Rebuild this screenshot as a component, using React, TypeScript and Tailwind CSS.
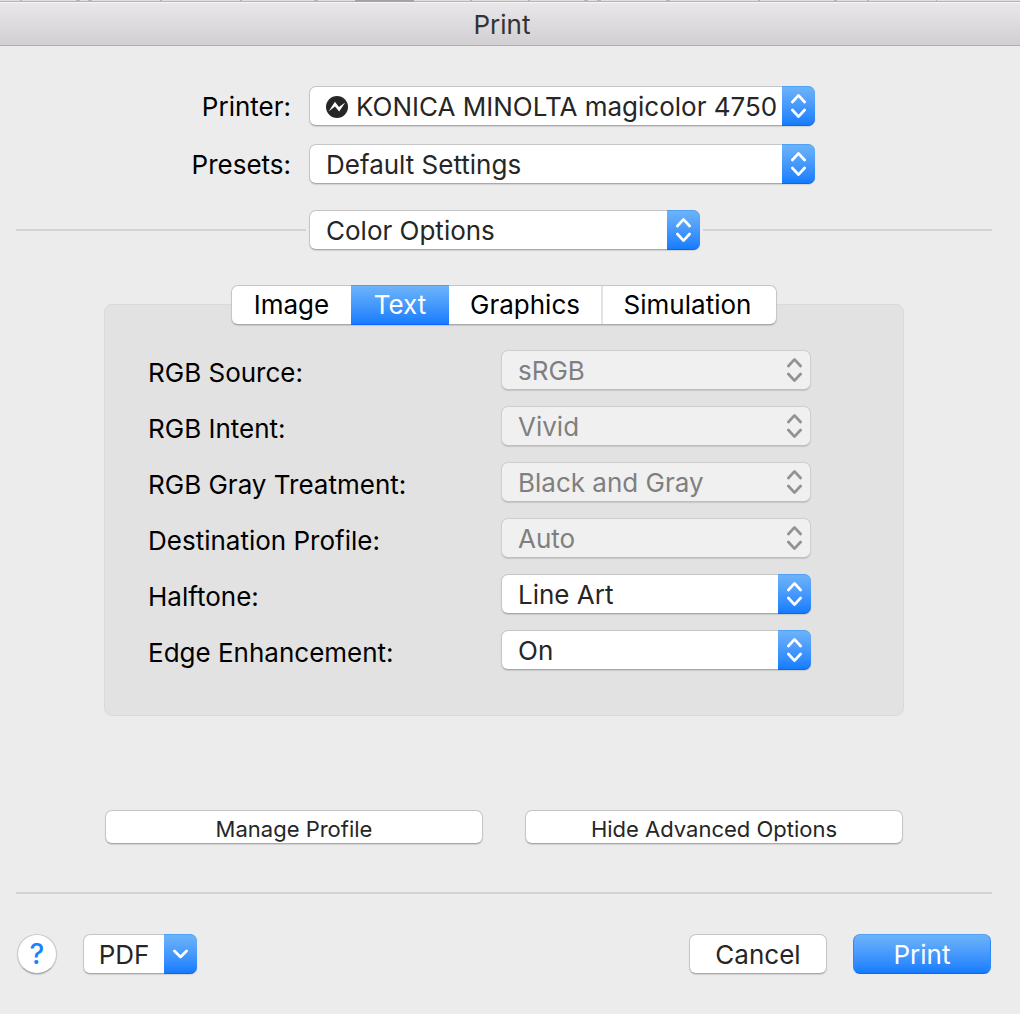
import type { ReactNode } from 'react';

interface PopUpProps {
  id: string;
  value: string;
  disabled?: boolean;
  label?: string;
  icon?: ReactNode;
}

const fields = [
  { id: 'rgb-source', label: 'RGB Source:', value: 'sRGB', disabled: true },
  { id: 'rgb-intent', label: 'RGB Intent:', value: 'Vivid', disabled: true },
  { id: 'rgb-gray', label: 'RGB Gray Treatment:', value: 'Black and Gray', disabled: true },
  { id: 'destination', label: 'Destination Profile:', value: 'Auto', disabled: true },
  { id: 'halftone', label: 'Halftone:', value: 'Line Art', disabled: false },
  { id: 'edge', label: 'Edge Enhancement:', value: 'On', disabled: false },
];

const tabs = [
  { name: 'Image', width: 'w-[119px]' },
  { name: 'Text', width: 'w-[98px]' },
  { name: 'Graphics', width: 'w-[152px]' },
  { name: 'Simulation', width: 'w-[175px]' },
];

const blue = 'bg-linear-to-b from-[#6cb3fa] to-[#147cfe] border-t border-b border-t-[#4ea0f6] border-b-[#0a62ff]';
const face = 'bg-white border border-[#c6c6c6] border-b-[#a9a9a9] rounded-[7px] shadow-[0_1px_1px_rgba(0,0,0,0.12)]';

function UpDown() {
  return (
    <svg width="16" height="26" viewBox="0 0 16 26" fill="none" stroke="currentColor" strokeWidth="2.7" strokeLinecap="round" strokeLinejoin="round">
      <path d="M1.4 9 7.5 2.4 13.6 9M1.4 17 7.5 23.6 13.6 17" />
    </svg>
  );
}

function PopUp({ id, value, disabled, label, icon }: PopUpProps) {
  return (
    <div className="relative w-full">
      <select
        id={id}
        aria-label={label}
        disabled={disabled}
        defaultValue={value}
        className={`block w-full h-10 appearance-none rounded-[7px] border pt-0.5 shadow-[0_1px_1px_rgba(0,0,0,0.12)] ${
          icon ? 'pl-[46px]' : 'pl-4'
        } ${
          disabled
            ? 'bg-[#f0f0f0] border-[#cecece] border-b-[#bebebe] text-[#7f7f7f] opacity-100'
            : 'bg-white border-[#c6c6c6] border-b-[#a9a9a9] text-[#262626]'
        }`}
      >
        <option>{value}</option>
      </select>
      {icon && <span className="absolute left-[17px] top-[10px] pointer-events-none">{icon}</span>}
      <span
        className={`absolute right-0 top-0 h-10 w-[33px] flex items-center justify-center rounded-r-[7px] pointer-events-none ${
          disabled ? 'text-[#929292]' : `text-white ${blue}`
        }`}
      >
        <UpDown />
      </span>
    </div>
  );
}

function PrinterIcon() {
  return (
    <svg width="22" height="22" viewBox="0 0 22 22">
      <circle cx="11" cy="11" r="11" fill="#262626" />
      <path d="M2.8 15.2 8.9 5.8 13 11 19.2 6.6 13.2 15.4 9 10.4Z" fill="#fff" />
    </svg>
  );
}

function TitleBar() {
  return (
    <header>
      {/* sliver of the window behind the sheet */}
      <svg className="block w-full h-0.5 bg-[#e0e0e0]" height="2">
        <path d="M20 0h2M76 0h4M88 0h4M160 0h2M240 0h2M314 0h4M470 0h2M528 0h2M584 0h4M597 0h4M666 0h4M758 0h2M834 0h3M867 0h2M936 0h1" stroke="#b8b8b8" strokeWidth="2" />
        <path d="M0 1.5h4000" stroke="#b4b4b4" />
        <path d="M355 1h59" stroke="#a4a4a4" strokeWidth="2" />
      </svg>
      <div className="h-11 pr-4 pt-0.5 flex items-center justify-center bg-linear-to-b from-[#e9e7e9] to-[#d1cfd1] border-t border-t-[#f6f6f6] border-b border-b-[#b0aeb0]">
        <h1 className="text-[#333333]">Print</h1>
      </div>
    </header>
  );
}

export default function App() {
  return (
    <div className="min-h-screen bg-[#ececec] text-black text-[26px] leading-8 font-['Inter','Liberation_Sans',sans-serif]">
      <TitleBar />

      <main className="pl-4 pr-7 pt-10">
        <div className="grid grid-cols-[275px_minmax(0,506px)] gap-x-[18px] gap-y-[18px] items-center">
          <label htmlFor="printer" className="text-right pt-0.5">Printer:</label>
          <PopUp id="printer" value="KONICA MINOLTA magicolor 4750" icon={<PrinterIcon />} />
          <label htmlFor="presets" className="text-right pt-0.5">Presets:</label>
          <PopUp id="presets" value="Default Settings" />
        </div>

        <div className="mt-[26px] flex items-center gap-[3px]">
          <div className="w-[290px] h-0.5 bg-[#d3d3d3]" />
          <div className="w-[391px]">
            <PopUp id="section" label="Section" value="Color Options" />
          </div>
          <div className="flex-1 h-0.5 bg-[#d3d3d3]" />
        </div>

        <section className="mx-[88px] mt-[54px] h-[412px] rounded-lg border border-[#dadada] bg-[#e2e2e2]">
          <div className={`-mt-5 mx-auto w-fit h-10 flex ${face}`}>
            {tabs.map((tab) => (
              <button
                key={tab.name}
                aria-pressed={tab.name === 'Text'}
                className={`${tab.width} ${
                  tab.name === 'Text' ? `-my-px text-white ${blue}` : ''
                } ${tab.name === 'Simulation' ? 'border-l-2 border-[#e4e4e4] pr-1' : ''}`}
              >
                {tab.name}
              </button>
            ))}
          </div>

          <div className="mt-[25px] pl-[43px] pr-[92px] flex flex-col gap-4">
            {fields.map((field) => (
              <div key={field.id} className="flex items-center">
                <label htmlFor={field.id} className="flex-1 pt-1.5">{field.label}</label>
                <div className="w-[310px]">
                  <PopUp id={field.id} value={field.value} disabled={field.disabled} />
                </div>
              </div>
            ))}
          </div>
        </section>

        <div className="mx-[89px] mt-[94px] grid grid-cols-2 gap-[42px] text-[22px]">
          <button className={`h-[34px] pt-0.5 ${face} text-[#262626]`}>Manage Profile</button>
          <button className={`h-[34px] pt-0.5 ${face} text-[#262626]`}>Hide Advanced Options</button>
        </div>

        <div className="mt-12 h-0.5 bg-[#d3d3d3]" />

        <footer className="mt-10 px-px flex items-center">
          <button
            aria-label="Help"
            className="size-10 rounded-full bg-white border border-[#c9c9c9] border-b-[#ababab] shadow-[0_1px_1px_rgba(0,0,0,0.15)] text-[#1a82fb] text-[28px] font-medium"
          >
            ?
          </button>
          <button className={`ml-[26px] w-[114px] h-10 flex ${face} text-[#262626]`}>
            <span className="flex-1 self-center pt-0.5">PDF</span>
            <span className={`-my-px -mr-px w-[33px] h-10 flex items-center justify-center rounded-r-[7px] text-white ${blue}`}>
              <svg width="16" height="10" viewBox="0 0 16 10" fill="none" stroke="currentColor" strokeWidth="2.8" strokeLinecap="round" strokeLinejoin="round">
                <path d="M1.5 2 7.5 8 13.5 2" />
              </svg>
            </span>
          </button>
          <button className={`ml-auto w-[138px] h-10 pt-0.5 ${face} text-[#262626]`}>Cancel</button>
          <button className={`ml-[26px] w-[138px] h-10 pt-0.5 rounded-[7px] border-x border-x-[#2b8af8] text-white ${blue}`}>Print</button>
        </footer>
      </main>
    </div>
  );
}
